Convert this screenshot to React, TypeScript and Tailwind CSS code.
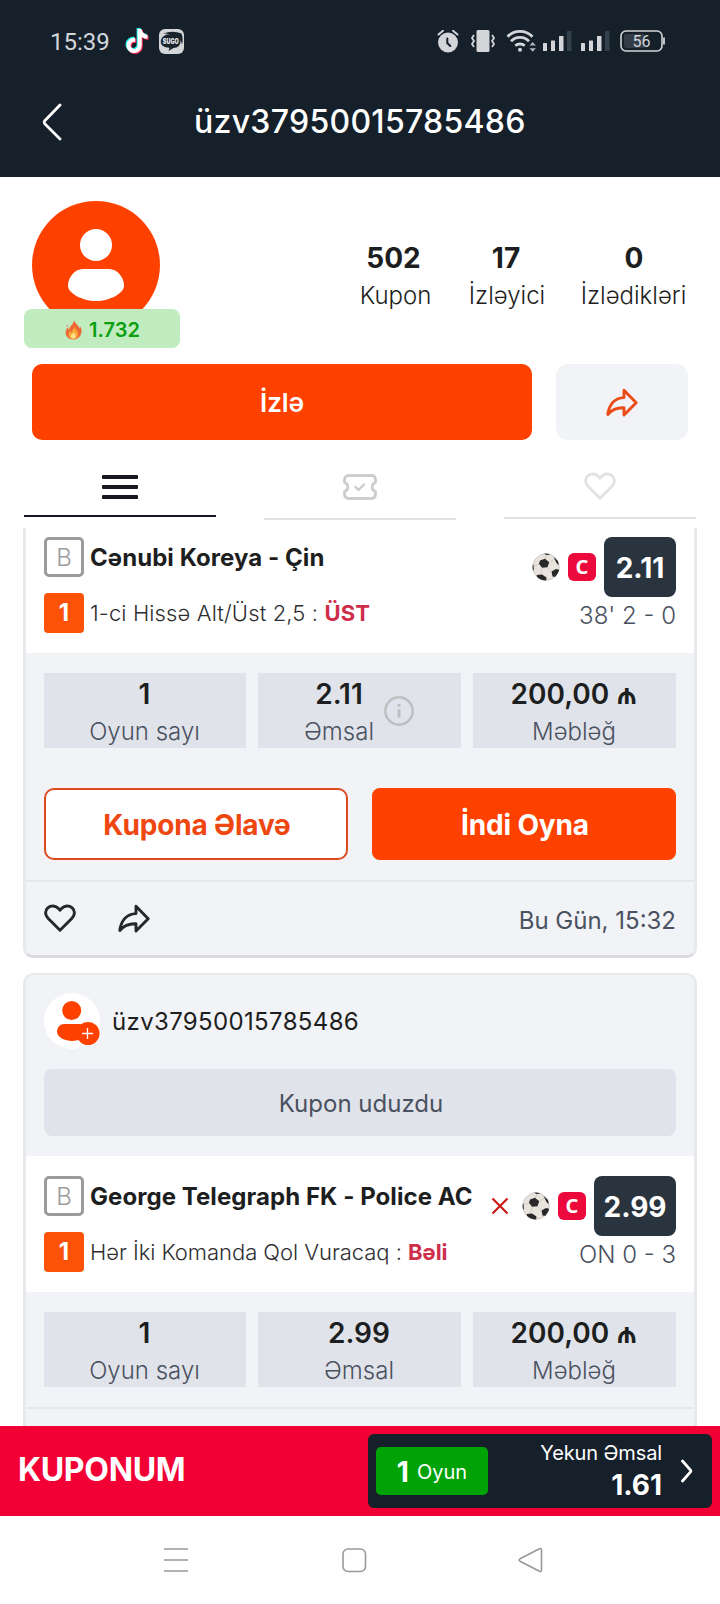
import type { ReactNode } from "react";
import { FaTiktok } from "react-icons/fa6";

type Bet = {
  match: string;
  market: string;
  marketClassName: string;
  pick: string;
  odds: string;
  score: string;
  lost?: boolean;
};

type CouponTotals = {
  label: string;
  value: string;
  hasInfo?: boolean;
};

const USERNAME = "üzv37950015785486";

const profileStats = [
  { value: "502", label: "Kupon", className: "w-[75px]", valueClassName: "-ml-1" },
  { value: "17", label: "İzləyici", className: "ml-[34px] w-[80px]", valueClassName: "-ml-0.5" },
  { value: "0", label: "İzlədikləri", className: "ml-[31px] w-[111px]", valueClassName: "ml-px" }
];

const firstBet: Bet = {
  match: "Cənubi Koreya - Çin",
  market: "1-ci Hissə Alt/Üst 2,5 :",
  marketClassName: "tracking-[0.13px]",
  pick: "ÜST",
  odds: "2.11",
  score: "38' 2 - 0"
};

const secondBet: Bet = {
  match: "George Telegraph FK - Police AC",
  market: "Hər İki Komanda Qol Vuracaq :",
  marketClassName: "tracking-[-0.04px]",
  pick: "Bəli",
  odds: "2.99",
  score: "ON 0 - 3",
  lost: true
};

export default function App() {
  return (
    <div className="flex h-[1604px] w-[720px] flex-col overflow-hidden bg-white font-[Inter,sans-serif] text-[#1d1e20]">
      <div className="h-[177px] shrink-0 bg-[#15202b]">
        <StatusBar />
        <header className="flex h-[79px] items-center pl-[42px]">
          <svg width="20" height="38" viewBox="0 0 20 38" fill="none" stroke="white" strokeWidth="2.8" strokeLinecap="round" strokeLinejoin="round">
            <path d="M18 2 3 17.4q-1.6 1.8 0 3.6L18 36" />
          </svg>
          <h1 className="ml-[132px] text-[32px] font-medium tracking-[0.28px] text-white">{USERNAME}</h1>
        </header>
      </div>
      <Profile />
      <Tabs />
      <main className="flex h-[898px] shrink-0 flex-col gap-[15px] overflow-hidden px-[23px]">
        <article className="rounded-b-[10px] border-x-[3px] border-b-[3px] border-[#e8e9ec] border-b-[#d9dbe0] bg-[#f2f3f7]">
          <BetRow bet={firstBet} className="pt-[9px]" />
          <div className="px-[18px] py-5">
            <Totals
              items={[
                { value: "1", label: "Oyun sayı" },
                { value: "2.11", label: "Əmsal", hasInfo: true },
                { value: "200,00 ₼", label: "Məbləğ" }
              ]}
            />
            <div className="mt-10 grid grid-cols-2 gap-6 text-[28px] font-bold tracking-[-0.15px]">
              <button className="h-[72px] rounded-[10px] border-2 border-[#de4a20] bg-white pt-0.5 pl-0.5 text-[#ee4711]">
                Kupona Əlavə
              </button>
              <button className="h-[72px] rounded-lg bg-[#ff4100] pt-0.5 pl-0.5 text-white">İndi Oyna</button>
            </div>
          </div>
          <footer className="flex h-[75px] items-center border-t-2 border-[#e6e7eb] px-[18px]">
            <HeartIcon className="mt-[-1px] h-7 w-8 text-[#25272c]" />
            <ShareIcon className="ml-[42px] h-[29px] w-8 text-[#25272c]" />
            <time className="mt-[5px] ml-auto text-2xl text-[#4a5160]">Bu Gün, 15:32</time>
          </footer>
        </article>

        <article className="h-[500px] shrink-0 rounded-t-[10px] border-x-[3px] border-t-2 border-[#e8e9ec] bg-[#f2f3f7]">
          <div className="px-[18px] pt-[18px] pb-5">
            <div className="flex items-center gap-3">
              <FollowAvatar />
              <span className="mt-0.5 text-2xl tracking-[0.35px]">{USERNAME}</span>
            </div>
            <div className="mt-5 flex h-[67px] items-center justify-center rounded-lg bg-[#e1e3eb] pt-0.5 pl-0.5 text-2xl text-[#4a5160]">
              Kupon uduzdu
            </div>
          </div>
          <BetRow bet={secondBet} className="pt-5" />
          <div className="border-b-2 border-[#e6e7ec] px-[18px] py-5">
            <Totals
              items={[
                { value: "1", label: "Oyun sayı" },
                { value: "2.99", label: "Əmsal" },
                { value: "200,00 ₼", label: "Məbləğ" }
              ]}
            />
          </div>
        </article>
      </main>
      <CouponBar />
      <SystemNav />
    </div>
  );
}

function StatusBar() {
  return (
    <div className="flex h-[82px] items-center pr-[55px] pl-[50px] text-[#d3d7dc]">
      <span className="pt-px font-[Roboto] text-2xl leading-6">15:39</span>
      <span className="relative ml-[14px] size-6">
        <FaTiktok className="absolute top-[-1px] left-0 size-6 text-[#25f4ee]" />
        <FaTiktok className="absolute top-px left-[2px] size-6 text-[#fe2c55]" />
        <FaTiktok className="absolute top-0 left-px size-6 text-white" />
      </span>
      <svg className="ml-[11px] overflow-visible" width="25" height="25" viewBox="0 0 25 25">
        <rect width="25" height="25" rx="6" fill="#d3d5d9" />
        <path d="M4 4.500Q14 1 22.500 4.500q2 5 .5 11Q21 5 4 4.500z" fill="#1b242d" />
        <path d="M12 5c6 0 9.500 2.500 9.500 7.200s-3 6.300-7 6.800L9.500 22l1-3.300C5 18.500 1.800 16.500 1.800 12.500S6 5 12 5z" fill="#1b242d" />
        <text x="11.800" y="15" textAnchor="middle" fontSize="7" fontWeight="900" fill="#e3e5e8" textLength="16" lengthAdjust="spacingAndGlyphs">
          SUGO
        </text>
      </svg>

      <svg className="ml-auto" width="22" height="24" viewBox="0 0 22 24">
        <circle cx="11" cy="13.500" r="10" fill="#d3d5d9" />
        <path d="M1.500 5.500 6 1.800M20.500 5.500 16 1.800" stroke="#d3d5d9" strokeWidth="2" strokeLinecap="round" />
        <path d="M10.300 9.500v4.500l3 3" fill="none" stroke="#15202b" strokeWidth="2" strokeLinecap="round" />
      </svg>
      <svg className="ml-[11px]" width="26" height="24" viewBox="0 0 26 24" fill="none" stroke="#d3d5d9" strokeWidth="1.800">
        <rect x="6.500" y="1" width="13" height="22" rx="1.500" fill="#d3d5d9" stroke="none" />
        <path d="m4 6-2 3 2 3-2 3 2 3M22 6l2 3-2 3 2 3-2 3" />
      </svg>
      <svg className="ml-[10px]" width="30" height="24" viewBox="0 0 30 24" fill="none" stroke="#d3d5d9" strokeWidth="2.800">
        <path d="M1.500 7.700a17.500 17.500 0 0 1 25 0M5 12.300a12.500 12.500 0 0 1 18 0M9.300 16.800a7 7 0 0 1 9.400 0" />
        <circle cx="14" cy="20.800" r="2" fill="#d3d5d9" stroke="none" />
        <path d="m23.500 16.500 3.200-3.500 3.200 3.500zM23.500 19.200l3.200 3.500 3.200-3.500z" fill="#b0b5ba" stroke="none" />
      </svg>
      <Signal className="ml-[7px]" />
      <Signal className="ml-[9px]" />
      <svg className="ml-[10px]" width="45" height="22" viewBox="0 0 45 22">
        <rect x="4" y="4" width="21" height="14" rx="2" fill="#333d48" />
        <rect x="1" y="1" width="41" height="20" rx="5" fill="none" stroke="#d3d5d9" strokeWidth="1.600" />
        <path d="M44 7.500v7" stroke="#d3d5d9" strokeWidth="1.800" />
        <text x="21.500" y="16.500" textAnchor="middle" fontFamily="Roboto" fontSize="16" fill="#d3d5d9">
          56
        </text>
      </svg>
    </div>
  );
}

function Signal({ className }: { className: string }) {
  return (
    <svg className={className} width="29" height="20" viewBox="0 0 29 20" fill="#d3d5d9">
      <rect x="0" y="12" width="4" height="8" rx="0.500" />
      <rect x="8" y="9.500" width="4" height="10.500" rx="0.500" />
      <rect x="16" y="5" width="4.500" height="15" rx="0.500" />
      <rect x="24" y="0" width="4.500" height="20" rx="0.500" fill="#34404b" />
    </svg>
  );
}

function Profile() {
  return (
    <section className="h-[263px] shrink-0 px-8 pt-6">
      <div className="flex h-[163px]">
        <div className="relative size-32 shrink-0">
          <svg width="128" height="128" viewBox="0 0 128 128">
            <circle cx="64" cy="64" r="64" fill="#ff4100" />
            <circle cx="64" cy="44" r="16" fill="white" />
            <path d="M52 68h24c9 0 16 7.500 16 17 0 7-14 15-28 15s-28-8-28-15c0-9.500 7-17 16-17z" fill="white" />
          </svg>
          <div className="absolute top-[108px] -left-2 flex h-[39px] w-[156px] items-center justify-center gap-[7px] rounded-lg bg-[#c0ecc0] pt-[3px] pl-px text-xl font-semibold text-[#0b9f10]">
            <FireIcon />
            1.732
          </div>
        </div>
        <div className="mt-[38px] ml-[198px] flex shrink-0 text-center">
          {profileStats.map((stat) => (
            <div key={stat.label} className={stat.className}>
              <p className={`text-[28px] leading-[38px] font-bold ${stat.valueClassName}`}>{stat.value}</p>
              <p className="text-2xl leading-[38px] font-[350] whitespace-nowrap">{stat.label}</p>
            </div>
          ))}
        </div>
      </div>
      <div className="flex gap-6">
        <button className="h-[76px] w-[500px] rounded-[10px] bg-[#ff4100] text-[26px] font-semibold text-white">
          İzlə
        </button>
        <button className="flex h-[76px] w-[132px] items-center justify-center rounded-xl bg-[#f2f3f7]">
          <ShareIcon className="h-[29px] w-8 text-[#ea4c17]" />
        </button>
      </div>
    </section>
  );
}

function Tabs() {
  return (
    <nav className="flex h-[88px] shrink-0 items-start justify-between px-6">
      <Tab className="h-[77px] border-[#18161f]">
        <svg width="36" height="24" viewBox="0 0 36 24" fill="#18161f">
          <rect width="36" height="4" rx="1" />
          <rect y="10" width="36" height="4" rx="1" />
          <rect y="20" width="36" height="4" rx="1" />
        </svg>
      </Tab>
      <Tab className="h-[80px] border-[#e1e1e5]">
        <svg width="34" height="26" viewBox="0 0 34 26" fill="none" stroke="#cdcdd0" strokeWidth="2.800" strokeLinejoin="round" strokeLinecap="round">
          <path d="M6 1.500h22q4.500 0 4.500 4.500v2.500a4.700 4.700 0 0 0 0 9V20q0 4.500-4.500 4.500H6q-4.500 0-4.500-4.500v-2.500a4.700 4.700 0 0 0 0-9V6q0-4.500 4.500-4.500z" />
          <path d="m12.500 13 3 3 5.500-5.500" strokeWidth="2.400" />
        </svg>
      </Tab>
      <Tab className="h-[79px] border-[#e1e1e5]">
        <HeartIcon className="mt-[-2px] h-7 w-8 text-[#e2e2e6]" />
      </Tab>
    </nav>
  );
}

function Tab({ className, children }: { className: string; children: ReactNode }) {
  return (
    <div className={`w-48 border-b-2 pt-[34px] ${className}`}>
      <div className="flex h-[26px] items-center justify-center">{children}</div>
    </div>
  );
}

function BetRow({ bet, className }: { bet: Bet; className: string }) {
  return (
    <div className={`flex justify-between bg-white px-[18px] pb-5 ${className}`}>
      <div className="flex flex-col gap-4 whitespace-nowrap">
        <div className="flex items-center gap-[6px]">
          <span className="flex size-10 items-center justify-center rounded-[5px] border-[3px] border-[#9b9b9d] pt-px text-2xl font-[350] text-[#9b9b9d]">
            B
          </span>
          <span className="pt-0.5 text-2xl font-bold tracking-[0.06px]">{bet.match}</span>
        </div>
        <div className="flex items-center gap-[6px] text-[22px] font-[350] text-[#2e2e30]">
          <span className="flex size-10 items-center justify-center rounded-[4px] bg-[#fb5207] text-2xl font-bold text-white">
            1
          </span>
          <span className={bet.marketClassName}>
            {bet.market} <b className="font-bold text-[#cf2e4b]">{bet.pick}</b>
          </span>
        </div>
      </div>
      <div className="flex h-24 flex-col items-end">
        <div className="flex items-center">
          {bet.lost && (
            <svg className="mr-[13px]" width="18" height="18" viewBox="0 0 18 18" stroke="#cb1a1a" strokeWidth="2.200">
              <path d="m1.500 1.500 15 15M16.500 1.500l-15 15" />
            </svg>
          )}
          <BallIcon />
          <span className="mx-2 flex size-7 items-center justify-center rounded-[6px] bg-[#ec0a3c] pb-px font-['Noto_Sans'] text-xl leading-7 font-bold text-white">
            C
          </span>
          <span className="flex h-[60px] min-w-[72px] items-center justify-center rounded-lg bg-[#2a343f] px-[9.5px] pt-0.5 text-[28px] font-bold text-white">
            {bet.odds}
          </span>
        </div>
        <span className="pt-px text-2xl leading-9 font-[350] text-[#4a5160]">{bet.score}</span>
      </div>
    </div>
  );
}

function Totals({ items }: { items: CouponTotals[] }) {
  return (
    <div className="grid grid-cols-[202px_203px_203px] gap-3">
      {items.map((item) => (
        <div key={item.label} className="flex h-[75px] items-center justify-center gap-[10px] bg-[#e1e3eb] text-center">
          <div className="-ml-px pt-[5px]">
            <p className="text-[28px] leading-[37px] font-semibold">{item.value}</p>
            <p className="text-2xl leading-[37px] font-[350] text-[#4a5160]">{item.label}</p>
          </div>
          {item.hasInfo && (
            <svg width="30" height="30" viewBox="0 0 30 30" fill="none" stroke="#bfbfc1">
              <circle cx="15" cy="15" r="13.700" strokeWidth="2.400" />
              <path d="M15 13v8.500M15 8v2.800" strokeWidth="2.800" />
            </svg>
          )}
        </div>
      ))}
    </div>
  );
}

function CouponBar() {
  return (
    <div className="flex h-[90px] shrink-0 items-center justify-between bg-[#f20035] pr-2 pl-[18px] text-white">
      <span className="pb-0.5 text-[32px] font-bold tracking-[-0.3px]">KUPONUM</span>
      <div className="flex h-[74px] w-[344px] items-center rounded-[6px] bg-[#15202b] pr-[19px] pl-2">
        <div className="flex h-12 w-28 items-center justify-center gap-2 rounded-[5px] bg-[#00a306]">
          <b className="pt-0.5 text-[28px]">1</b>
          <span className="pt-0.5 text-xl">Oyun</span>
        </div>
        <div className="ml-auto pb-1 text-right">
          <p className="text-xl leading-8 tracking-[-0.12px]">Yekun Əmsal</p>
          <p className="text-[28px] leading-[32px] font-bold">1.61</p>
        </div>
        <svg className="ml-[19px]" width="12" height="24" viewBox="0 0 12 24" fill="none" stroke="white" strokeWidth="2.800" strokeLinecap="round" strokeLinejoin="round">
          <path d="m1.500 2 8 9.200q.6.800 0 1.600l-8 9.200" />
        </svg>
      </div>
    </div>
  );
}

function SystemNav() {
  return (
    <div className="flex h-[88px] shrink-0 items-center bg-[#fefefe] pl-[164px] text-[#999]">
      <svg width="24" height="26" viewBox="0 0 24 26" stroke="currentColor" strokeWidth="1.600">
        <path d="M0 2h24M0 13h24M0 24h24" />
      </svg>
      <svg className="ml-[153px]" width="26" height="26" viewBox="0 0 26 26" fill="none" stroke="currentColor" strokeWidth="1.600">
        <rect x="2" y="2" width="22.500" height="22.500" rx="5" />
      </svg>
      <svg className="ml-[150px]" width="26" height="26" viewBox="0 0 26 26" fill="none" stroke="currentColor" strokeWidth="1.600" strokeLinejoin="round">
        <path d="M3 11.800 22.500 1.800q2-.8 2 1.200v20q0 2-2 1.200L3 14.200q-1.500-1.200 0-2.400z" />
      </svg>
    </div>
  );
}

function HeartIcon({ className }: { className: string }) {
  return (
    <svg className={className} viewBox="0 0 32 28" fill="none" stroke="currentColor" strokeWidth="2.900" strokeLinejoin="round">
      <path d="M16 26.300 4 14.300C.8 11 .8 6.500 3.800 3.800 6.800 1.200 11.300 1.400 14 4.100L16 6.200l2-2.100c2.700-2.700 7.200-2.900 10.200-.3 3 2.700 3 7.200-.2 10.500z" />
    </svg>
  );
}

function ShareIcon({ className }: { className: string }) {
  return (
    <svg className={className} viewBox="0 0 32 29" fill="none" stroke="currentColor" strokeWidth="2.900" strokeLinejoin="round">
      <path d="M18 2.200 30.200 14.700 18 27v-7.200C11 19.500 6 21.500 1.800 26.500 3 17.500 8 10 18 9.600z" />
    </svg>
  );
}

function FireIcon() {
  return (
    <svg width="17" height="20" viewBox="0 0 17 20">
      <path d="M9 0c.5 3.500 5 5 5.500 8.500.6-.5.800-1.400.6-2.300C16.500 8 17 10.500 16.300 13c-.9 4-4 6.500-8 6.500S.8 17 .6 13c-.1-2.500 1-4.500 2.500-6 0 1.200.3 2.200 1 2.800C4.300 6 8.800 4.500 9 0z" fill="#ee6a35" />
      <path d="M9.500 6.500c.2 2.500 3.500 4 3.500 7.300 0 3-2 5-4.700 5S3.500 17 3.600 14.300c0-1.500.7-2.700 1.600-3.500.2 1 .7 1.600 1.300 1.900C6.500 10.500 9 9.500 9.500 6.500z" fill="#fba83a" />
      <path d="M8.800 12c0 1.500 2 2 2 4 0 1.600-1 2.700-2.500 2.700S5.800 17.600 5.900 16c.1-1.800 2.500-2 2.900-4z" fill="#fde08a" />
      <path d="M2 4.500q1 1 .2 2.400-1-1-.2-2.400z" fill="#d9472f" />
    </svg>
  );
}

function BallIcon() {
  return (
    <svg width="28" height="28" viewBox="0 0 28 28">
      <defs>
        <clipPath id="ball">
          <circle cx="14" cy="14" r="13.400" />
        </clipPath>
      </defs>
      <circle cx="14" cy="14" r="13.300" fill="#e9e3de" stroke="#bdb7b3" strokeWidth="0.600" />
      <g clipPath="url(#ball)" fill="#282828">
        <path d="m8 7.500 5-1.700 4.200 3.500-1.700 5-5.500.5-3-4z" />
        <path d="m11 0 6 .3 1 1.300-3.500.3zM21.500 4l4.500 4 .8 4-2-1.500-1.800-3.500z" />
        <path d="m19.500 18.500 4.500-2.500 4 1-4 7-3.500-.5zM4.500 22l5.500-.5 4.500 3-.5 4.500-8-1.500zM-1 11l2.500 1 .3 4.500L.5 19z" />
      </g>
      <path d="m13 6 2-4M17.200 9.500l4.800-3M15.500 14.500l4 4M10 15l-1.200 6.300M7 11l-5 1.500" stroke="#c3bbb5" strokeWidth="0.600" />
    </svg>
  );
}

function FollowAvatar() {
  return (
    <svg width="56" height="56" viewBox="0 0 56 56">
      <circle cx="28" cy="28" r="28" fill="white" />
      <circle cx="27.700" cy="17.500" r="9.500" fill="#ff4100" />
      <path d="M20.500 31h15c4.500 0 7 4 7 8 0 5-7.500 9-14.500 9s-15-4-15-9c0-4.500 3-8 7.500-8z" fill="#ff4100" />
      <circle cx="44" cy="40.500" r="11.500" fill="#ff4100" />
      <path d="M43.500 35v11M38 40.500h11" stroke="white" strokeWidth="1.300" />
    </svg>
  );
}
